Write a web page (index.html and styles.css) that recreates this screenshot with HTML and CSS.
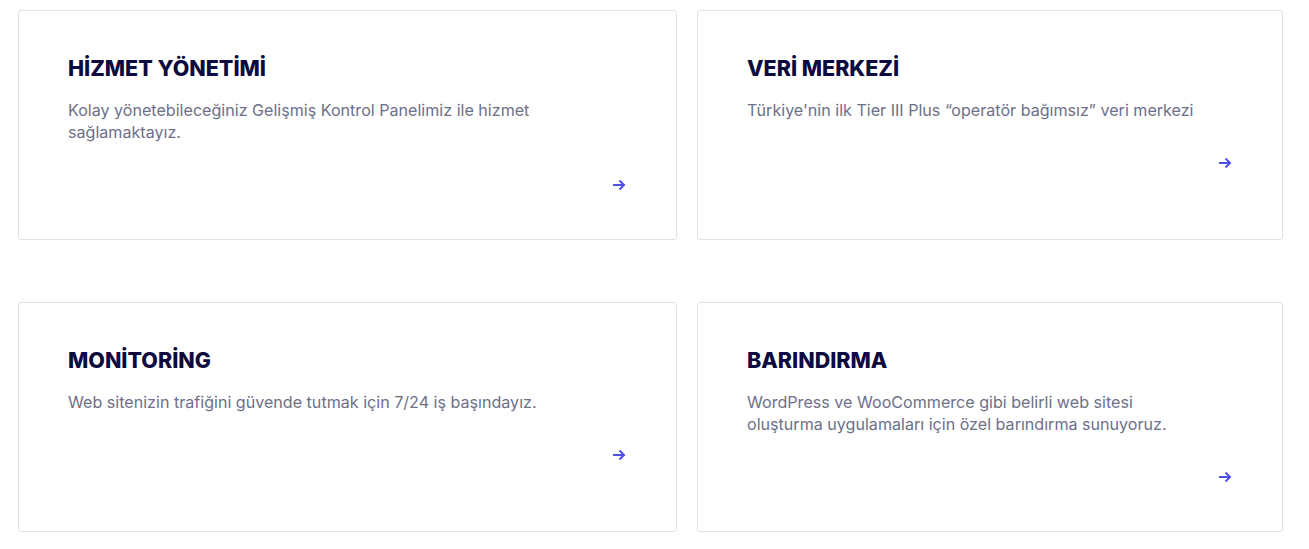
FILE: index.html
```html
<!DOCTYPE html>
<html lang="tr">
<head>
    <meta charset="UTF-8">
    <meta name="viewport" content="width=device-width, initial-scale=1.0">
    <title>Hizmetler</title>
    <link rel="stylesheet" href="styles.css">
</head>
<body>
    <div class="services">
        <div class="card">
            <h3>HİZMET YÖNETİMİ</h3>
            <p>Kolay yönetebileceğiniz Gelişmiş Kontrol Panelimiz ile hizmet sağlamaktayız.</p>
            <a href="#" class="more">
                <svg width="14" height="12" viewBox="0 0 14 12"><path d="M1 6h11M7.5 1.5L12 6l-4.5 4.5" fill="none" stroke="currentColor" stroke-width="2"/></svg>
            </a>
        </div>
        <div class="card">
            <h3>VERİ MERKEZİ</h3>
            <p>Türkiye'nin ilk Tier III Plus “operatör bağımsız” veri merkezi</p>
            <a href="#" class="more">
                <svg width="14" height="12" viewBox="0 0 14 12"><path d="M1 6h11M7.5 1.5L12 6l-4.5 4.5" fill="none" stroke="currentColor" stroke-width="2"/></svg>
            </a>
        </div>
        <div class="card">
            <h3>MONİTORİNG</h3>
            <p>Web sitenizin trafiğini güvende tutmak için 7/24 iş başındayız.</p>
            <a href="#" class="more">
                <svg width="14" height="12" viewBox="0 0 14 12"><path d="M1 6h11M7.5 1.5L12 6l-4.5 4.5" fill="none" stroke="currentColor" stroke-width="2"/></svg>
            </a>
        </div>
        <div class="card">
            <h3>BARINDIRMA</h3>
            <p>WordPress ve WooCommerce gibi belirli web sitesi oluşturma uygulamaları için özel barındırma sunuyoruz.</p>
            <a href="#" class="more">
                <svg width="14" height="12" viewBox="0 0 14 12"><path d="M1 6h11M7.5 1.5L12 6l-4.5 4.5" fill="none" stroke="currentColor" stroke-width="2"/></svg>
            </a>
        </div>
    </div>
</body>
</html>
```

FILE: styles.css
```css
body {
    margin: 0;
    background-color: #fff;
    font-family: Inter, "Open Sans", sans-serif;
}
.services {
    display: grid;
    grid-template-columns: 659px 586px;
    column-gap: 20px;
    row-gap: 62px;
    padding: 10px 0 0 18px;
}
.card {
    height: 230px;
    box-sizing: border-box;
    border: 1px solid #e1e1e8;
    border-radius: 3px;
    padding: 43px 50px 0 49px;
    display: flex;
    flex-direction: column;
}
.card h3 {
    margin: 0;
    font-size: 21.5px;
    font-weight: 800;
    color: #0c0a3e;
    line-height: 28px;
}
.card p {
    margin: 17px 0 0;
    max-width: 452px;
    font-size: 16.1px;
    line-height: 22px;
    color: #6d7088;
}
.card:nth-child(odd) p {
    max-width: 480px;
}
.more {
    align-self: flex-end;
    margin-top: 36px;
    color: #4d4ff0;
    display: flex;
}
```
